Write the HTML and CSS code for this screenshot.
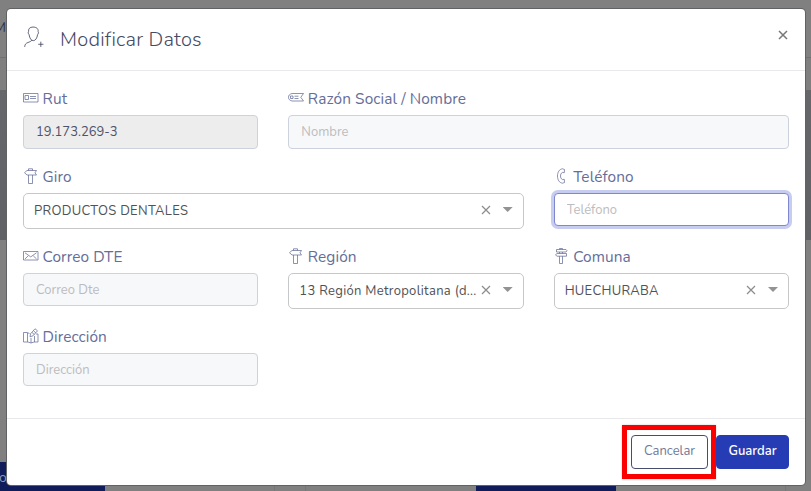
FILE: index.html
```html
<!DOCTYPE html>
<html lang="es">
<head>
<meta charset="utf-8">
<title>Modificar Datos</title>
<link rel="stylesheet" href="styles.css">
</head>
<body>
<svg class="sprite" aria-hidden="true">
  <symbol id="sign" viewBox="0 0 16 16"><path d="M5.500 2.500V.8h4v1.700M4 2.500h9.500L12 4.800l1.500 2.200H4L1.500 4.700zM5.500 7v8.500h4V7"/></symbol>
  <symbol id="clear" viewBox="0 0 10 10"><path d="M1 1l8 8M9 1L1 9"/></symbol>
</svg>
<div class="page">
  <div class="page-top">M</div>
  <div class="page-sub"></div>
  <div class="page-hero"></div>
  <div class="page-content">
    <div class="tile"><span class="tile-button first">o</span></div>
    <div class="tile"><span class="tile-button second"></span></div>
  </div>
</div>
<main class="modal">
  <header class="modal-header">
    <svg class="user-icon" viewBox="0 0 20 22"><path d="M9.500 1C6.400 1 5 2.700 5.300 5.200c-.8.7-.2 2.600.5 3.100C6.300 11.500 7.600 14 9.800 14s3.600-2.400 4.100-5.700c.7-.6 1.200-2.400.5-3.100C14.800 2.600 12.800 1 9.500 1zM8.300 13.500c-.4 1.300-1.800 1.500-3.600 2.300C2.500 16.600 1.700 17.700 1.600 20M17 15v5M14.500 17.500h5"/></svg>
    <h1>Modificar Datos</h1>
    <button class="close" aria-label="Cerrar"><svg viewBox="0 0 10 10"><use href="#clear"/></svg></button>
  </header>
  <form class="fields">
    <div class="field">
      <label><svg class="icon" viewBox="0 0 16 16"><path d="M.5 3.500h14.500v8.500H.5zM2 5.500h3.500v4H2zM7 6.500h6M7 8.500h6"/></svg>Rut</label>
      <input class="control locked" value="19.173.269-3" readonly>
    </div>
    <div class="field wide">
      <label><svg class="icon" viewBox="0 0 16 16"><path d="M4 3.500h11.500L12.800 7.300l2.700 3.700H4C1.300 10.300.5 9 .5 7.300S1.300 4.200 4 3.500zM2.500 6h2.500v2.500H2.500zM6.500 6.200h4M6.500 8.500h4"/></svg>Razón Social / Nombre</label>
      <input class="control" placeholder="Nombre">
    </div>
    <div class="field wide">
      <label><svg class="icon"><use href="#sign"/></svg>Giro</label>
      <div class="select"><span class="value">PRODUCTOS DENTALES</span><svg class="clear"><use href="#clear"/></svg><i class="caret"></i></div>
    </div>
    <div class="field">
      <label><svg class="icon" viewBox="0 0 16 16"><path d="M8.500.8C5.300 1.200 3.500 4.200 3.500 8s1.800 6.800 5 7.200l2-.7-.2-3.200-2 .3C7 10.700 6.500 9.400 6.500 8s.5-2.700 1.800-3.600l2 .3.2-3.200z"/></svg>Teléfono</label>
      <input class="control short focused" placeholder="Teléfono">
    </div>
    <div class="field">
      <label><svg class="icon" viewBox="0 0 16 16"><path d="M.5 3.500h14.500v8.500H.5zM2 4.800l5.700 4.100 5.800-4.100M2 10.900l3.200-3M13.500 10.900l-3.200-3"/></svg>Correo DTE</label>
      <input class="control short" placeholder="Correo Dte">
    </div>
    <div class="field">
      <label><svg class="icon"><use href="#sign"/></svg>Región</label>
      <div class="select"><span class="value">13 Región Metropolitana (d...</span><svg class="clear"><use href="#clear"/></svg><i class="caret"></i></div>
    </div>
    <div class="field">
      <label><svg class="icon" viewBox="0 0 16 16"><path d="M5.500 1.500V.5h3v1M2.500 1.500h9.500l1 1.200-1 1.300H2.500zM3 5.500h9.500v2.700H3L1.500 6.800zM5.500 8.200v7.300h3V8.200M5.500 4v1.500M8.500 4v1.500"/></svg>Comuna</label>
      <div class="select"><span class="value">HUECHURABA</span><svg class="clear"><use href="#clear"/></svg><i class="caret"></i></div>
    </div>
    <div class="field">
      <label><svg class="icon" viewBox="0 0 16 16"><path d="M6.500 5.500L4 4.500H.5v9.500H5l3 1 3-1h4V6h-2M4.500 5v9M8 10v5M11.500 8v6M7 8.800l.5-3L12 .8l2.500 2-4.500 5zM9 4.500l2.300 2M10.500 2.800l2.300 2"/></svg>Dirección</label>
      <input class="control short" placeholder="Dirección">
    </div>
  </form>
  <footer class="modal-footer">
    <div class="highlight"><button class="button cancel">Cancelar</button></div>
    <button class="button save">Guardar</button>
  </footer>
</main>
</body>
</html>
```
FILE: styles.css
```css
* { box-sizing: border-box; }
body { margin: 0; width: 811px; height: 491px; overflow: hidden; font-family: Nunito, Lato, sans-serif; }
.sprite { display: none; }
svg { fill: none; stroke: currentColor; }
.page { display: flex; flex-direction: column; height: 491px; background: #808080; }
.page-top { height: 58px; padding-top: 18px; border-bottom: 1px solid #717171; color: #30354d; font-size: 14px; text-indent: -6px; }
.page-sub { height: 32px; background: #7f7f7f; }
.page-hero { height: 150px; background: linear-gradient(#66676b, #606164); }
.page-content { flex: 1; display: flex; align-items: flex-end; gap: 30px; }
.tile { width: 275px; height: 145px; display: flex; align-items: flex-end; border-right: 1px solid #777; }
.tile + .tile { width: 481px; border-left: 1px solid #777; }
.tile-button { height: 29px; background: #111c5b; color: #9298b8; font-size: 14px; }
.tile-button.first { width: 105px; padding-top: 6px; text-indent: -1px; }
.tile-button.second { width: 140px; margin-left: 170px; }
.modal { position: absolute; left: 7px; top: 9px; width: 798px; height: 476px; display: flex; flex-direction: column; background: #fff; border-radius: 4px; box-shadow: 0 0 0 1px #606264; }
.modal-header { height: 62px; display: flex; align-items: center; padding: 0 17px 0 16px; border-bottom: 1px solid #e9e9eb; color: #454a63; }
.user-icon { width: 21px; height: 23px; margin-top: -4px; stroke-width: .8; }
h1 { margin: 0 auto 0 16px; font-size: 20px; line-height: 26px; font-weight: 350; letter-spacing: .24px; }
.close { width: 10px; height: 10px; padding: 0; margin-top: -9px; border: 0; background: none; color: #777; display: flex; }
.close svg { width: 10px; height: 10px; stroke-width: 1.5; }
.fields { flex: 1; display: grid; grid-template-columns: repeat(3, 1fr); grid-template-rows: 78px 80px 80px 64px; column-gap: 30px; padding: 16px; }
.wide { grid-column: span 2; }
.field { min-width: 0; }
label { display: flex; align-items: center; height: 24px; margin-bottom: 4px; color: #656d98; font-size: 15.4px; line-height: 24px; letter-spacing: .1px; }
.field > .control, .select { display: flex; width: 100%; }
.icon { flex: none; width: 16px; height: 16px; margin: -3px 3.5px 0 0; stroke-width: .75; }
.control { height: 34px; border: 1px solid #ced2dc; border-radius: 4px; padding: 0 12px; background: #f7f8fa; font: 13px Nunito, Lato, sans-serif; color: #4e536a; outline: none; }
.control.short { height: 33px; }
.control::placeholder { color: #bcbcbe; opacity: 1; }
.control.locked { background: #ededed; }
.control.focused { background: #fff; border-color: #7e88cf; box-shadow: 0 0 0 3px #c7cdf0; }
.select { align-items: center; height: 36px; border: 1px solid #c6c7c9; border-radius: 5px; padding: 0 10px; color: #505155; font-size: 13px; letter-spacing: .3px; }
.value { flex: 1; min-width: 0; white-space: nowrap; margin-top: -1px; }
.clear { flex: none; width: 10px; height: 10px; margin: -2px 12px 0 0; color: #8b8c8e; stroke-width: 1.2; }
.caret { flex: none; width: 10px; height: 5px; margin-top: -3px; background: #929395; clip-path: polygon(0 0, 100% 0, 50% 100%); }
.modal-footer { height: 67px; display: flex; align-items: center; justify-content: flex-end; padding: 0 16px; border-top: 1px solid #e9e9eb; }
.highlight { border: 5px solid #fa0000; padding: 5px 3px 5px 4px; box-shadow: 0 0 2px #ccc; }
.button { height: 34px; border: 1px solid #474d6b; border-radius: 4px; padding: 0 0 2px; font: 13px Nunito, Lato, sans-serif; }
.cancel { display: block; width: 77px; background: #fff; color: #737997; }
.save { width: 73px; background: #263cb5; border-color: #263cb5; color: #fff; font-weight: 600; }
```
